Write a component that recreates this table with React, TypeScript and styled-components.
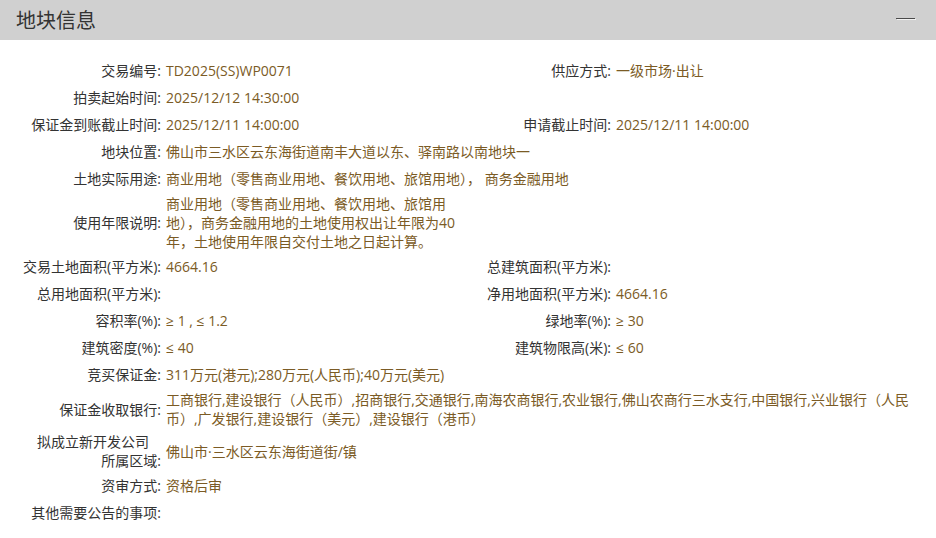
import React from "react";
import styled, { createGlobalStyle } from "styled-components";

const Global = createGlobalStyle`
  html, body { margin: 0; padding: 0; background: #fff; }
  body {
    font-family: "Open Sans", "Noto Sans CJK SC", sans-serif;
    font-size: 14px;
    color: #333;
  }
`;

const Panel = styled.section`
  width: 936px;
  background: #fff;
`;

const Header = styled.header`
  height: 40px;
  background: #d0d0d0;
  display: flex;
  align-items: center;
  justify-content: space-between;
  padding: 0 21px 0 16px;
  box-sizing: border-box;
`;

const Title = styled.h2`
  margin: 0;
  font-family: "Noto Sans CJK SC", sans-serif;
  font-size: 20px;
  font-weight: 400;
  color: #333;
  line-height: 40px;
`;

const Collapse = styled.span`
  display: block;
  width: 19px;
  height: 1px;
  background: #4a4a4a;
  box-shadow: 1px 1px 0 #f2f2f2;
  margin-bottom: 4px;
`;

const Grid = styled.div`
  display: grid;
  grid-template-columns: 163px 305px 145px 1fr;
  grid-auto-rows: minmax(27px, auto);
  align-items: center;
  padding: 17px 20px 0 0;
`;

const Label = styled.div`
  text-align: right;
  padding: 2px 2px 2px 0;
  line-height: 19px;
  color: #333;
  white-space: nowrap;
`;

const LabelLine = styled.span<{ $inset?: number }>`
  display: block;
  padding-right: ${(p) => p.$inset ?? 0}px;
`;

const Value = styled.div<{ $span?: number }>`
  grid-column: span ${(p) => p.$span ?? 1};
  padding: 2px 0 2px 3px;
  line-height: 19px;
  color: #7b5b25;
  word-break: normal;
`;

type Cell = { label: React.ReactNode; value: string; span?: number };

const rows: Cell[][] = [
  [
    { label: "交易编号:", value: "TD2025(SS)WP0071" },
    { label: "供应方式:", value: "一级市场·出让" },
  ],
  [
    { label: "拍卖起始时间:", value: "2025/12/12 14:30:00" },
    { label: "", value: "" },
  ],
  [
    { label: "保证金到账截止时间:", value: "2025/12/11 14:00:00" },
    { label: "申请截止时间:", value: "2025/12/11 14:00:00" },
  ],
  [{ label: "地块位置:", value: "佛山市三水区云东海街道南丰大道以东、驿南路以南地块一", span: 3 }],
  [
    {
      label: "土地实际用途:",
      value: "商业用地（零售商业用地、餐饮用地、旅馆用地）， 商务金融用地",
      span: 3,
    },
  ],
  [
    {
      label: "使用年限说明:",
      value:
        "商业用地（零售商业用地、餐饮用地、旅馆用地），商务金融用地的土地使用权出让年限为40年，土地使用年限自交付土地之日起计算。",
    },
    { label: "", value: "" },
  ],
  [
    { label: "交易土地面积(平方米):", value: "4664.16" },
    { label: "总建筑面积(平方米):", value: "" },
  ],
  [
    { label: "总用地面积(平方米):", value: "" },
    { label: "净用地面积(平方米):", value: "4664.16" },
  ],
  [
    { label: "容积率(%):", value: "≥ 1 , ≤ 1.2" },
    { label: "绿地率(%):", value: "≥ 30" },
  ],
  [
    { label: "建筑密度(%):", value: "≤ 40" },
    { label: "建筑物限高(米):", value: "≤ 60" },
  ],
  [{ label: "竞买保证金:", value: "311万元(港元);280万元(人民币);40万元(美元)", span: 3 }],
  [
    {
      label: "保证金收取银行:",
      value:
        "工商银行,建设银行（人民币）,招商银行,交通银行,南海农商银行,农业银行,佛山农商行三水支行,中国银行,兴业银行（人民币）,广发银行,建设银行（美元）,建设银行（港币）",
      span: 3,
    },
  ],
  [
    {
      label: (
        <>
          <LabelLine $inset={12}>拟成立新开发公司</LabelLine>
          <LabelLine>所属区域:</LabelLine>
        </>
      ),
      value: "佛山市·三水区云东海街道街/镇",
      span: 3,
    },
  ],
  [{ label: "资审方式:", value: "资格后审", span: 3 }],
  [{ label: "其他需要公告的事项:", value: "", span: 3 }],
];

export default function App() {
  return (
    <>
      <Global />
      <Panel>
        <Header>
          <Title>地块信息</Title>
          <Collapse />
        </Header>
        <Grid>
          {rows.map((row, i) =>
            row.map((c, j) => (
              <React.Fragment key={`${i}-${j}`}>
                <Label>{c.label}</Label>
                <Value $span={c.span}>{c.value}</Value>
              </React.Fragment>
            ))
          )}
        </Grid>
      </Panel>
    </>
  );
}
